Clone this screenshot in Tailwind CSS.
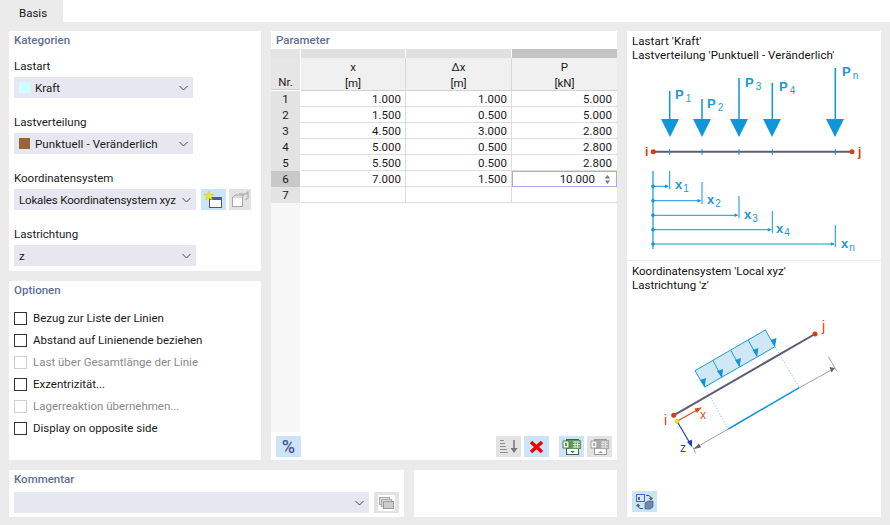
<!DOCTYPE html>
<html lang="de">
<head>
<meta charset="UTF-8">
<title>Basis</title>
<script src="https://cdn.jsdelivr.net/npm/@tailwindcss/browser@4"></script>
</head>
<body class="w-[890px] h-[525px] overflow-hidden bg-[#ebebeb] text-[11.5px] leading-[14px] text-[#1a1a1a] font-['Roboto',sans-serif]">
  <!-- tab strip -->
  <div class="flex h-[22px] bg-white">
    <div class="w-[63px] bg-[#ebebeb] pl-[19px] pt-[6px]">Basis</div>
  </div>

  <div class="flex gap-[10px] pl-[9px] pt-[9px]">
    <div class="w-[608px] flex flex-col gap-[10px]">
      <div class="flex gap-[10px] h-[429px]">
        <!-- left column -->
        <div class="w-[252px] flex flex-col gap-[10px]">
          <section class="h-[240px] bg-white px-[5px] pt-[2px]">
            <h2 class="font-medium text-[#5f6f96] h-[14px]">Kategorien</h2>
            <p class="mt-[12px]">Lastart</p>
            <div class="mt-[4px] w-[179px] h-[21px] bg-[#e6e7f0] flex items-center pl-[5px] pr-[5px]">
              <span class="w-[11px] h-[11px] bg-[#ccffff]"></span>
              <span class="ml-[5px] flex-1">Kraft</span>
              <svg class="w-[9px] h-[6px]" viewBox="0 0 9 6"><path d="M.5 1 4.500 5 8.500 1" fill="none" stroke="#444" stroke-width="1"/></svg>
            </div>
            <p class="mt-[17px]">Lastverteilung</p>
            <div class="mt-[4px] w-[179px] h-[21px] bg-[#e6e7f0] flex items-center pl-[5px] pr-[5px]">
              <span class="w-[11px] h-[11px] bg-[#996633]"></span>
              <span class="ml-[5px] flex-1 tracking-[0.1px]">Punktuell - Veränderlich</span>
              <svg class="w-[9px] h-[6px]" viewBox="0 0 9 6"><path d="M.5 1 4.500 5 8.500 1" fill="none" stroke="#444" stroke-width="1"/></svg>
            </div>
            <p class="mt-[17px]">Koordinatensystem</p>
            <div class="mt-[4px] flex">
              <div class="w-[182px] h-[21px] bg-[#e6e7f0] flex items-center pl-[5px] pr-[5px]">
                <span class="flex-1 whitespace-nowrap tracking-[-0.16px]">Lokales Koordinatensystem xyz</span>
                <svg class="w-[9px] h-[6px]" viewBox="0 0 9 6"><path d="M.5 1 4.500 5 8.500 1" fill="none" stroke="#444" stroke-width="1"/></svg>
              </div>
              <button class="ml-[5px] w-[25px] h-[21px] bg-[#cce4f7] flex items-center justify-center">
                <svg class="w-[21px] h-[18px]" viewBox="0 0 21 18">
                  <rect x="6.500" y="6.500" width="12" height="10" fill="#fff" stroke="#555"/>
                  <rect x="6" y="6" width="13" height="3" fill="#4a5a9a"/>
                  <path d="M6 0 7.300 3.500 11 3.300 8.200 5.700 9.500 9 6 7.300 2.700 9 3.800 5.700 1 3.300 4.700 3.500Z" fill="#f4ea22" stroke="#c8b400" stroke-width=".4"/>
                </svg>
              </button>
              <button class="ml-[3px] w-[22px] h-[21px] bg-[#e3e3e3] flex items-center justify-center">
                <svg class="w-[19px] h-[17px]" viewBox="0 0 19 17">
                  <rect x="1.500" y="6.500" width="10" height="9" fill="#fff" stroke="#a8a8a8"/>
                  <path d="M1 7 4 4H13L11 7" fill="#ddd" stroke="#a8a8a8"/>
                  <path d="M8 3H15L17 1V7L14 9" fill="none" stroke="#b5b5b5" stroke-width="1.500"/>
                </svg>
              </button>
            </div>
            <p class="mt-[17px]">Lastrichtung</p>
            <div class="mt-[4px] w-[182px] h-[21px] bg-[#e6e7f0] flex items-center pl-[5px] pr-[5px]">
              <span class="flex-1">z</span>
              <svg class="w-[9px] h-[6px]" viewBox="0 0 9 6"><path d="M.5 1 4.500 5 8.500 1" fill="none" stroke="#444" stroke-width="1"/></svg>
            </div>
          </section>

          <section class="h-[179px] bg-white px-[5px] pt-[2px]">
            <h2 class="font-medium text-[#5f6f96] h-[14px]">Optionen</h2>
            <ul class="mt-[14px] flex flex-col gap-[8px]">
              <li class="flex items-center gap-[6px] h-[14px]"><span class="w-[13px] h-[13px] border border-[#333]"></span>Bezug zur Liste der Linien</li>
              <li class="flex items-center gap-[6px] h-[14px]"><span class="w-[13px] h-[13px] border border-[#333]"></span>Abstand auf Linienende beziehen</li>
              <li class="flex items-center gap-[6px] h-[14px] text-[#8a8a8a]"><span class="w-[13px] h-[13px] border border-[#cfcfcf]"></span>Last über Gesamtlänge der Linie</li>
              <li class="flex items-center gap-[6px] h-[14px]"><span class="w-[13px] h-[13px] border border-[#333]"></span>Exzentrizität...</li>
              <li class="flex items-center gap-[6px] h-[14px] text-[#8a8a8a]"><span class="w-[13px] h-[13px] border border-[#cfcfcf]"></span>Lagerreaktion übernehmen...</li>
              <li class="flex items-center gap-[6px] h-[14px]"><span class="w-[13px] h-[13px] border border-[#333]"></span>Display on opposite side</li>
            </ul>
          </section>
        </div>

        <!-- parameter table -->
        <section class="w-[346px] bg-white flex flex-col">
          <h2 class="font-medium text-[#5f6f96] h-[18px] pl-[5px] pt-[2px]">Parameter</h2>
          <div class="grid grid-cols-[29px_1px_104px_1px_105px_1px_105px] text-center">
            <div class="h-[9px] bg-[#e4e4e4]"></div><div></div><div class="bg-[#e0e0e0]"></div><div></div><div class="bg-[#e0e0e0]"></div><div></div><div class="bg-[#c4c4c4]"></div>
            <div class="h-[32px] bg-[#e6e6e6] border-b border-[#d0d0d0] flex items-end justify-center">Nr.</div><div></div>
            <div class="bg-[#f0f0f0] border-b border-[#d0d0d0] pt-[2px]">x<span class="block mt-[2px]">[m]</span></div><div class="bg-[#d8d8d8]"></div>
            <div class="bg-[#f0f0f0] border-b border-[#d0d0d0] pt-[2px]">Δx<span class="block mt-[2px]">[m]</span></div><div class="bg-[#d8d8d8]"></div>
            <div class="bg-[#f0f0f0] border-b border-[#d0d0d0] pt-[2px]">P<span class="block mt-[2px]">[kN]</span></div>
          </div>
          <div class="grid grid-cols-[29px_1px_104px_1px_105px_1px_105px] grid-rows-[repeat(7,16px)] text-right leading-[16px]">
            <div class="bg-[#e3e3e3] text-center">1</div><div></div><div class="border-b border-[#dcdcdc] pr-[4px]">1.000</div><div class="bg-[#dcdcdc]"></div><div class="border-b border-[#dcdcdc] pr-[4px]">1.000</div><div class="bg-[#dcdcdc]"></div><div class="border-b border-[#dcdcdc] pr-[5px]">5.000</div>
            <div class="bg-[#e3e3e3] text-center">2</div><div></div><div class="border-b border-[#dcdcdc] pr-[4px]">1.500</div><div class="bg-[#dcdcdc]"></div><div class="border-b border-[#dcdcdc] pr-[4px]">0.500</div><div class="bg-[#dcdcdc]"></div><div class="border-b border-[#dcdcdc] pr-[5px]">5.000</div>
            <div class="bg-[#e3e3e3] text-center">3</div><div></div><div class="border-b border-[#dcdcdc] pr-[4px]">4.500</div><div class="bg-[#dcdcdc]"></div><div class="border-b border-[#dcdcdc] pr-[4px]">3.000</div><div class="bg-[#dcdcdc]"></div><div class="border-b border-[#dcdcdc] pr-[5px]">2.800</div>
            <div class="bg-[#e3e3e3] text-center">4</div><div></div><div class="border-b border-[#dcdcdc] pr-[4px]">5.000</div><div class="bg-[#dcdcdc]"></div><div class="border-b border-[#dcdcdc] pr-[4px]">0.500</div><div class="bg-[#dcdcdc]"></div><div class="border-b border-[#dcdcdc] pr-[5px]">2.800</div>
            <div class="bg-[#e3e3e3] text-center">5</div><div></div><div class="border-b border-[#dcdcdc] pr-[4px]">5.500</div><div class="bg-[#dcdcdc]"></div><div class="border-b border-[#dcdcdc] pr-[4px]">0.500</div><div class="bg-[#dcdcdc]"></div><div class="border-b border-[#dcdcdc] pr-[5px]">2.800</div>
            <div class="bg-[#c8c8c8] text-center">6</div><div></div><div class="border-b border-[#dcdcdc] pr-[4px]">7.000</div><div class="bg-[#dcdcdc]"></div><div class="border-b border-[#dcdcdc] pr-[4px]">1.500</div><div class="bg-[#dcdcdc]"></div>
            <div class="border border-[#a9a9e6] flex items-center justify-end pr-[6px]">10.000
              <svg class="ml-[10px] w-[5px] h-[9px]" viewBox="0 0 5 9"><path d="M2.500 0 5 3.500H0ZM0 5.500H5L2.500 9Z" fill="#777"/></svg>
            </div>
            <div class="bg-[#e3e3e3] text-center">7</div><div></div><div class="border-b border-[#dcdcdc]"></div><div class="bg-[#dcdcdc]"></div><div class="border-b border-[#dcdcdc]"></div><div class="bg-[#dcdcdc]"></div><div class="border-b border-[#dcdcdc]"></div>
          </div>
          <div class="w-[29px] h-[229px] bg-[#f7f7f7]"></div>
          <!-- table toolbar -->
          <div class="flex pl-[5px] pr-[5px] mt-[4px]">
            <button class="w-[25px] h-[21px] bg-[#cce4f7] text-[#4b4f93] text-[18px] font-medium flex items-center justify-center">%</button>
            <button class="ml-auto w-[25px] h-[21px] bg-[#e3e3e3] flex items-center justify-center">
              <svg class="w-[19px] h-[15px]" viewBox="0 0 19 15"><path d="M1 1.500H5M1 4.500H6M1 7.500H7M1 10.500H8M1 13.500H9" stroke="#8f8f8f"/><path d="M15 1V10" stroke="#777" stroke-width="1.500"/><path d="M11.500 9H18.500L15 14Z" fill="#777"/></svg>
            </button>
            <button class="ml-[3px] w-[25px] h-[21px] bg-[#cce4f7] flex items-center justify-center">
              <svg class="w-[15px] h-[14px]" viewBox="0 0 15 14"><path d="M2 2 13 12M13 2 2 12" stroke="#f00000" stroke-width="3.500"/></svg>
            </button>
            <button class="ml-[10px] w-[25px] h-[21px] bg-[#cce4f7] flex items-center justify-center">
              <svg class="w-[20px] h-[18px]" viewBox="0 0 20 18"><rect x="4.500" y="1.500" width="12" height="15" fill="#fff" stroke="#555"/><rect x="5" y="2" width="14" height="9" fill="#5f9a58"/><path d="M11 4H18M11 6.500H18M11 9H18M13 3V10M15.500 3V10" stroke="#d5e8d0"/><path d="M1 3H7V10H1Z" fill="#fff" stroke="#3f7a3a"/><path d="M3 5 5 8M5 5 3 8" stroke="#3f7a3a"/><path d="M8 13H13L10.500 15Z" fill="#3f7a3a"/></svg>
            </button>
            <button class="ml-[3px] w-[25px] h-[21px] bg-[#e3e3e3] flex items-center justify-center">
              <svg class="w-[20px] h-[18px]" viewBox="0 0 20 18"><rect x="4.500" y="1.500" width="12" height="15" fill="#fff" stroke="#999"/><rect x="5" y="2" width="14" height="9" fill="#aaa"/><path d="M11 4H18M11 6.500H18M11 9H18M13 3V10M15.500 3V10" stroke="#e5e5e5"/><path d="M1 3H7V10H1Z" fill="#fff" stroke="#999"/><path d="M3 5 5 8M5 5 3 8" stroke="#999"/><path d="M8 15H13L10.500 13Z" fill="#999"/></svg>
            </button>
          </div>
        </section>
      </div>

      <!-- bottom row -->
      <div class="flex gap-[10px] h-[47px]">
        <section class="w-[395px] bg-white px-[5px] pt-[2px]">
          <h2 class="font-medium text-[#5f6f96] h-[14px]">Kommentar</h2>
          <div class="mt-[6px] flex">
            <div class="w-[355px] h-[21px] bg-[#e6e7f0] flex items-center justify-end pr-[5px]">
              <svg class="w-[9px] h-[6px]" viewBox="0 0 9 6"><path d="M.5 1 4.500 5 8.500 1" fill="none" stroke="#444" stroke-width="1"/></svg>
            </div>
            <button class="ml-[5px] w-[25px] h-[21px] bg-[#e3e3e3] flex items-center justify-center">
              <svg class="w-[17px] h-[16px]" viewBox="0 0 17 16"><rect width="17" height="16" fill="#fff"/><rect x="1.500" y="2.500" width="10" height="7" fill="#ddd" stroke="#aaa"/><rect x="3.500" y="4.500" width="10" height="7" fill="#ddd" stroke="#aaa"/><rect x="5.500" y="6.500" width="10" height="7" fill="#ccc" stroke="#999"/></svg>
            </button>
          </div>
        </section>
        <section class="w-[203px] bg-white"></section>
      </div>
    </div>

    <!-- right previews -->
    <div class="w-[254px] h-[486px] flex flex-col gap-px">
      <section class="h-[229px] bg-white">
        <div class="pl-[5px] pt-[3px] h-[31px] text-[#111] tracking-[0.08px]">Lastart 'Kraft'<br>Lastverteilung 'Punktuell - Veränderlich'</div>
        <svg class="block" width="254" height="198" viewBox="627 62 254 198" font-family="Liberation Sans, sans-serif">
          <path d="M669.700 91V120M702 99V120M739 78V120M772.300 83V120M835.300 68V120" stroke="#0f96d9" stroke-width="1.500" fill="none"/>
          <path d="M661 119H679L670 137ZM693 119H711L702 137ZM730 119H748L739 137ZM763 119H781L772 137ZM826 119H844L835 137Z" fill="#0f96d9"/>
          <path d="M653 151.700H852" stroke="#5c5c74" stroke-width="2"/>
          <path d="M669.700 149V155M702 149V155M739 149V155M772.300 149V155M835.300 149V155" stroke="#0f96d9"/>
          <circle cx="653.300" cy="151.700" r="2.500" fill="#d63c10"/><circle cx="852" cy="151.700" r="2.500" fill="#d63c10"/>
          <g fill="#d63c10" font-size="12" font-weight="700">
            <text x="645" y="156">i</text><text x="858" y="156">j</text>
          </g>
          <g fill="#1b9ad6" font-size="13" font-weight="700">
            <text x="675" y="99">P<tspan font-size="10" font-weight="400" dx="2" dy="3">1</tspan></text>
            <text x="707" y="108">P<tspan font-size="10" font-weight="400" dx="2" dy="3">2</tspan></text>
            <text x="745" y="87">P<tspan font-size="10" font-weight="400" dx="2" dy="3">3</tspan></text>
            <text x="779" y="91">P<tspan font-size="10" font-weight="400" dx="2" dy="3">4</tspan></text>
            <text x="842" y="76">P<tspan font-size="10" font-weight="400" dx="2" dy="3">n</tspan></text>
          </g>
          <g stroke="#0f96d9" fill="none">
            <path d="M653 171V249" stroke-width="1.200"/>
            <path d="M653 186.300H668M653 200.700H700M653 215.300H737M653 229.700H770M653 244H834"/>
            <path d="M669.700 171V189M702 182V204M739 196V218M772.300 211V233M835.300 225V247"/>
          </g>
          <g fill="#0f96d9">
            <circle cx="653" cy="186.300" r="1.800"/><circle cx="653" cy="200.700" r="1.800"/><circle cx="653" cy="215.300" r="1.800"/><circle cx="653" cy="229.700" r="1.800"/><circle cx="653" cy="244" r="1.800"/>
            <path d="M669 186.300 665 184.500V188.100ZM701.500 200.700 697.500 198.900V202.500ZM738.500 215.300 734.500 213.500V217.100ZM771.800 229.700 767.800 227.900V231.500ZM834.800 244 830.800 242.200V245.800Z"/>
          </g>
          <g fill="#1b9ad6" font-size="13" font-weight="700">
            <text x="675" y="189">x<tspan font-size="10" font-weight="400" dx="1" dy="3">1</tspan></text>
            <text x="707" y="204">x<tspan font-size="10" font-weight="400" dx="1" dy="3">2</tspan></text>
            <text x="744" y="219">x<tspan font-size="10" font-weight="400" dx="1" dy="3">3</tspan></text>
            <text x="776" y="233">x<tspan font-size="10" font-weight="400" dx="1" dy="3">4</tspan></text>
            <text x="841" y="248">x<tspan font-size="10" font-weight="400" dx="1" dy="3">n</tspan></text>
          </g>
        </svg>
      </section>
      <section class="flex-1 bg-white">
        <div class="pl-[5px] pt-[3px] h-[31px] text-[#111]">Koordinatensystem 'Local xyz'<br>Lastrichtung 'z'</div>
        <svg class="block" width="254" height="198" viewBox="627 292 254 198" font-family="Liberation Sans, sans-serif">
          <path d="M695 370.700 765.300 330 775 346.700 704.700 387Z" fill="#d0e8f6" stroke="#1b9ad6"/>
          <path d="M713 360.700 721.700 377M731 350.700 739.300 366M748.300 340.300 757 356" stroke="#1b9ad6" fill="none"/>
          <path d="M704.700 387 700 380 706 378ZM722 378 717 371 723 369ZM739.500 367 735 360 741 358ZM757 357 752.500 350 758.500 348ZM775 347 770.500 340 776.500 338Z" fill="#0f96d9"/>
          <path d="M704.700 387 728.300 429M775 346.700 799.300 387.700" stroke="#8ccdee" stroke-dasharray="1.500 1.500"/>
          <path d="M728.300 429 799.300 387.700" stroke="#0f96d9" stroke-width="1.500"/>
          <path d="M693.300 449 728.300 429M799.300 387.700 835 368" stroke="#a0a0a8"/>
          <path d="M692.700 446.700 695.700 453.300M828.300 356.700 837 371.300" stroke="#a8a8a8"/>
          <path d="M693.500 449 699 443.500 701 447.500ZM835 368 829.500 367 831.500 372.500Z" fill="#666"/>
          <path d="M673.700 415.300 815 334" stroke="#5c5c74" stroke-width="2"/>
          <circle cx="673.700" cy="415.300" r="2.500" fill="#d63c10"/><circle cx="815" cy="334" r="2.500" fill="#d63c10"/>
          <path d="M677 421.300 698 409.500" stroke="#d6501e" stroke-width="1.200"/>
          <path d="M702 407.300 694.500 408.500 697 413Z" fill="#d6501e"/>
          <path d="M677 421.300 691 445" stroke="#1c3fc0" stroke-width="1.200"/>
          <path d="M692 447 687 442 692 439.500Z" fill="#1c3fc0"/>
          <circle cx="677" cy="421.300" r="2" fill="#f4ea22" stroke="#c8a800" stroke-width=".5"/>
          <text x="822" y="331" fill="#d63c10" font-size="14">j</text>
          <text x="664" y="425" fill="#d63c10" font-size="14">i</text>
          <text x="700" y="419" fill="#d6501e" font-size="12">x</text>
          <text x="680" y="452" fill="#1c3fc0" font-size="12">z</text>
        </svg>
        <button class="mt-[1px] ml-[5px] w-[25px] h-[21px] bg-[#cce4f7] flex items-center justify-center">
          <svg class="w-[20px] h-[18px]" viewBox="0 0 20 18">
            <rect x="1.500" y="1.500" width="8" height="7" fill="#dbe6fb" stroke="#3f66cc"/><path d="M3 7V4H5V7Z" fill="#3f66cc"/>
            <path d="M11 2.500C14 2 16 3 16 6M14.500 5H17.500L16 7Z" fill="none" stroke="#555"/>
            <path d="M8 15.500C5 16 3 15 3 12M1.500 13H4.500L3 11Z" fill="none" stroke="#555"/>
            <path d="M10 10 13 8H18V14L15 16H10Z" fill="#6f87aa" stroke="#4d607e" stroke-width=".7"/>
          </svg>
        </button>
      </section>
    </div>
  </div>
</body>
</html>
